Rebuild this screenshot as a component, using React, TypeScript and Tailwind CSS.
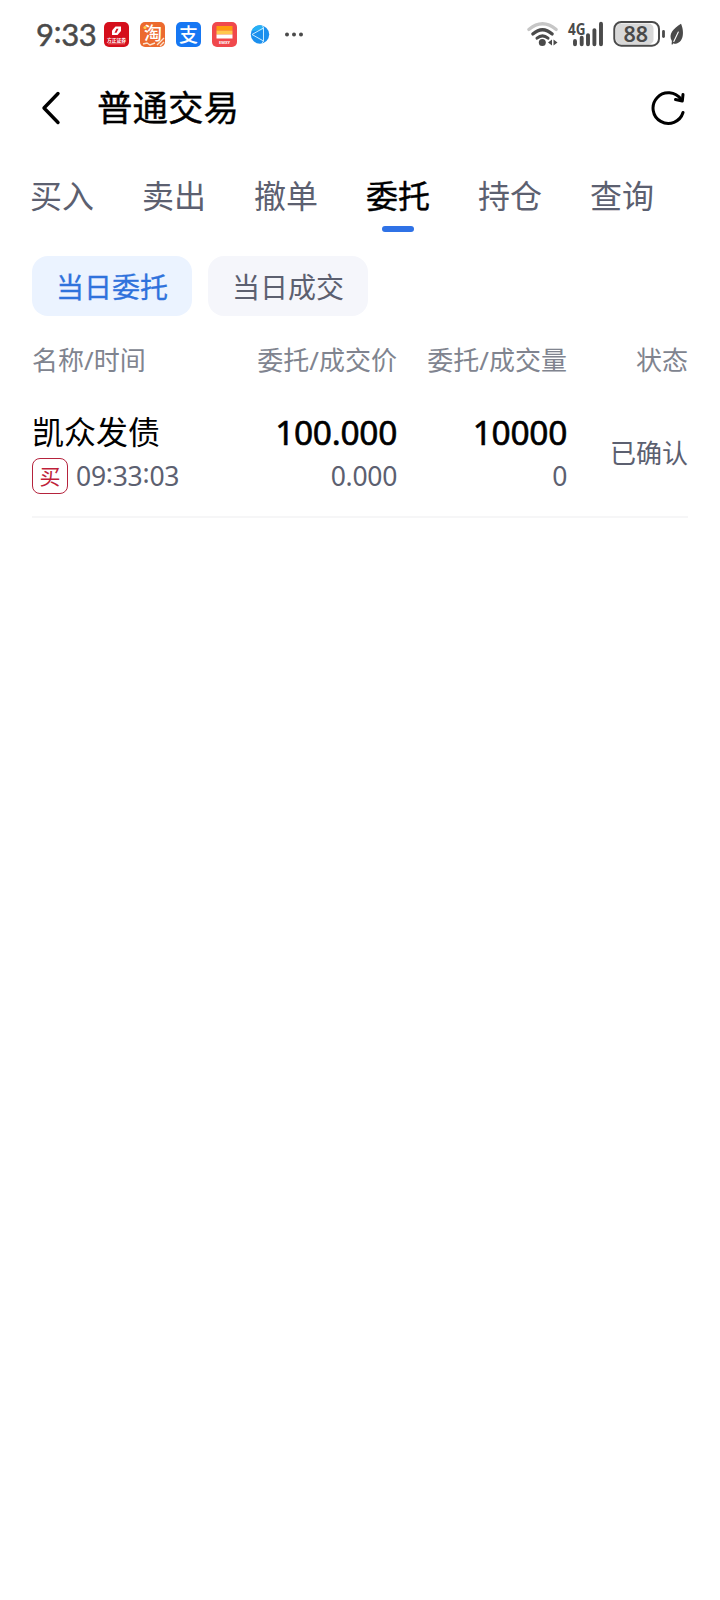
import React from 'react';

interface Order {
    name: string;
    side: string;
    time: string;
    price: string;
    dealPrice: string;
    amount: string;
    dealAmount: string;
    status: string;
}

const TABS = ['买入', '卖出', '撤单', '委托', '持仓', '查询'];
const FILTERS = ['当日委托', '当日成交'];

const ORDERS: Order[] = [
    {
        name: '凯众发债',
        side: '买',
        time: '09:33:03',
        price: '100.000',
        dealPrice: '0.000',
        amount: '10000',
        dealAmount: '0',
        status: '已确认',
    },
];

// Digits with the colons lifted to the middle of the figure height
const Clock: React.FC<{ value: string }> = ({ value }) => (
    <>
        {value.split(':').map((part, i) => (
            <React.Fragment key={i}>
                {i > 0 && <span className="relative -top-[0.1em]">:</span>}
                {part}
            </React.Fragment>
        ))}
    </>
);

const AppIcons: React.FC = () => (
    <div className="flex items-center gap-[11px] ml-[10px]">
        <svg className="w-[25px] h-[25px]" viewBox="0 0 25 25">
            <rect width="25" height="25" rx="5" fill="#d50f1c" />
            <path d="M11.500 4.500h5.500v4.500l-3.500 4h-5.500V8.500z" fill="#fff" />
            <path d="M12.500 6.800h2l-2 4h-2z" fill="#d50f1c" />
            <text x="12.500" y="19.800" textAnchor="middle" fontSize="4.800" fontWeight="700" fill="#fff">方正证券</text>
            <path d="M4 21.800h17" stroke="#f08a8a" strokeWidth="0.800" />
        </svg>
        <svg className="w-[25px] h-[25px]" viewBox="0 0 25 25">
            <rect width="25" height="25" rx="5" fill="#ec6a2e" />
            <text x="13" y="17.500" textAnchor="middle" fontSize="18" fontWeight="500" fill="#fff">淘</text>
            <path d="M3 22l4-1 3 2 5-2M17 23l7-7M20 24l4-4" stroke="#fbe3d0" strokeWidth="1.400" fill="none" />
            <circle cx="5" cy="5.500" r="1.600" fill="#ffd04a" />
        </svg>
        <svg className="w-[25px] h-[25px]" viewBox="0 0 25 25">
            <rect width="25" height="25" rx="5" fill="#1677f3" />
            <text x="12.500" y="19.500" textAnchor="middle" fontSize="19" fontWeight="500" fill="#fff">支</text>
        </svg>
        <svg className="w-[25px] h-[25px]" viewBox="0 0 25 25">
            <rect width="25" height="25" rx="5" fill="#f0484c" />
            <path d="M4.500 4h16v4.500h-16z" fill="#ff9a0c" />
            <path d="M4.500 8.500h16v4h-16z" fill="#ffc74d" />
            <path d="M4.500 12.500h16v4h-16z" fill="#fff" />
            <text x="12.500" y="22.300" textAnchor="middle" fontSize="4" fontWeight="700" fill="#fff">EMXY</text>
        </svg>
        <svg className="w-[25px] h-[25px]" viewBox="0 0 25 25">
            <circle cx="12" cy="12.500" r="9.200" fill="#1b8fee" />
            <path d="M3.500 9a9.200 9.200 0 0 1 11-5.300L15.500 8z" fill="#27b1f5" />
            <path d="M4 12.500L15.500 6v13zM15.500 6l-1-2.500M15.500 19l-1.500 2.500" stroke="#c9ecff" strokeWidth="1" fill="none" />
        </svg>
        <svg className="w-[20px] h-[25px]" viewBox="0 0 20 25">
            <circle cx="3" cy="12.500" r="2" fill="#4a4a4a" />
            <circle cx="10" cy="12.500" r="2" fill="#4a4a4a" />
            <circle cx="17" cy="12.500" r="2" fill="#4a4a4a" />
        </svg>
    </div>
);

const SystemIcons: React.FC = () => (
    <svg className="w-[160px] h-[30px] overflow-visible" viewBox="0 0 160 30">
        {/* wifi */}
        <g fill="none" strokeLinecap="round">
            <path d="M2.800 9.500Q16.500 -2 30.200 9.500" stroke="#c6c6c6" strokeWidth="3.200" />
            <path d="M6.800 14Q16.500 5.500 26.200 14" stroke="#4a4a4a" strokeWidth="3.200" />
            <path d="M11 18.200Q16.500 13.500 22 18.200" stroke="#4a4a4a" strokeWidth="3" />
        </g>
        <circle cx="16.300" cy="22.500" r="3.500" fill="#4a4a4a" />
        <path d="M26 19.500v6l-4-3zM27.500 19.500v6l4-3z" fill="#4a4a4a" />
        {/* signal */}
        <text x="42" y="14.500" fontSize="16.500" fontWeight="700" fill="#4a4a4a" textLength="17.500" lengthAdjust="spacingAndGlyphs">4G</text>
        <path d="M49 21v3.200M55.700 17.800v6.400M62 15.100v9.100M68.400 10.100v14.100M75 3.800v20.400" stroke="#4a4a4a" strokeWidth="3.900" strokeLinecap="round" />
        {/* battery */}
        <rect x="90" y="3.500" width="37.500" height="21" rx="5" fill="#d8d8d8" />
        <rect x="88.300" y="2" width="44.700" height="23.700" rx="7" fill="none" stroke="#4a4a4a" strokeWidth="2" />
        <text x="109.700" y="21.500" textAnchor="middle" fontSize="21.500" fontWeight="600" fill="#4a4a4a">88</text>
        <path d="M137.500 11.500v5" stroke="#4a4a4a" strokeWidth="2.800" strokeLinecap="round" />
        {/* power saving leaf */}
        <path d="M155 3.800c3 6.500 3.500 18-5 20-1 .2-2-.1-2.600-.6l-.8 1.200c-.5.400-1.100.1-1-.5l.3-2.900c-4-7 1.600-12.500 9.100-17.200z" fill="#4a4a4a" />
        <path d="M147.800 21.500l4.500-9.500" stroke="#fff" strokeWidth="1.100" strokeLinecap="round" />
    </svg>
);

const StatusBar: React.FC = () => (
    <div className="h-[69px] pl-9 pr-[34px] flex items-center justify-between text-[#4a4a4a]">
        <div className="flex items-center">
            <span className="w-[58px] font-['Lato'] text-[31px] leading-none tracking-[-0.3px] whitespace-nowrap [-webkit-text-stroke:0.5px]"><Clock value="9:33" /></span>
            <AppIcons />
        </div>
        <SystemIcons />
    </div>
);

const Header: React.FC = () => (
    <header className="h-[77px] pl-[39px] pr-[34px] flex items-center">
        <button aria-label="返回">
            <svg className="w-[24px] h-[36px]" viewBox="0 0 24 36" fill="none" stroke="#000" strokeWidth="3.400" strokeLinecap="round" strokeLinejoin="round">
                <path d="M19 3.500L5 18L19 32.500" />
            </svg>
        </button>
        <h1 className="ml-[34px] -mt-[2px] text-[35.500px] leading-[40px] [-webkit-text-stroke:0.4px]">普通交易</h1>
        <button className="ml-auto" aria-label="刷新">
            <svg className="w-[36px] h-[36px]" viewBox="0 0 36 36" fill="none" stroke="#000" strokeWidth="3" strokeLinecap="round" strokeLinejoin="round">
                <path d="M33 22.500A15.300 15.300 0 1 1 31 9.500" />
                <path d="M25.500 9.500l6.800 1.500.7-6.500" />
            </svg>
        </button>
    </header>
);

const OrderRow: React.FC<{ order: Order }> = ({ order }) => (
    <div className="h-[130px] pt-[24px] border-b-2 border-[#f6f6f7] flex">
        <div className="w-[165px]">
            <p className="h-[40px] text-[32px] leading-[40px]">{order.name}</p>
            <div className="h-[36px] mt-[6px] flex items-center gap-2">
                <span className="w-[36px] h-[36px] rounded-[8px] border border-[#b5233d] text-[#c01f3a] text-[21px] leading-[34px] text-center">{order.side}</span>
                <span className="text-[26.500px] leading-none tracking-[-0.250px] text-[#5c6070]"><Clock value={order.time} /></span>
            </div>
        </div>
        <div className="w-[200px] text-right">
            <p className="h-[40px] text-[33.500px] leading-[40px] tracking-[-0.300px] [-webkit-text-stroke:0.600px]">{order.price}</p>
            <p className="h-[36px] mt-[6px] text-[26.500px] leading-[36px] tracking-[-0.300px] text-[#5c6070]">{order.dealPrice}</p>
        </div>
        <div className="w-[170px] text-right">
            <p className="h-[40px] text-[33.500px] leading-[40px] tracking-[-0.300px] [-webkit-text-stroke:0.600px]">{order.amount}</p>
            <p className="h-[36px] mt-[6px] text-[26.500px] leading-[36px] tracking-[-0.300px] text-[#5c6070]">{order.dealAmount}</p>
        </div>
        <p className="h-[80px] ml-auto text-[26px] leading-[82px] text-[#5c6070]">{order.status}</p>
    </div>
);

export default function App() {
    const activeTab = '委托';
    const activeFilter = '当日委托';

    return (
        <div className="w-[720px] h-[1600px] bg-white text-black overflow-hidden font-['Noto_Sans','Noto_Sans_CJK_SC',sans-serif]">
            <StatusBar />
            <Header />
            <nav className="h-[110px] pt-[30px] pl-[30px] flex gap-[48px]">
                {TABS.map(tab => (
                    <button key={tab} className="w-[64px] flex flex-col items-center">
                        <span className={`h-[40px] text-[32px] leading-[40px] whitespace-nowrap ${tab === activeTab ? 'text-black [-webkit-text-stroke:0.4px]' : 'text-[#5c6070]'}`}>{tab}</span>
                        {tab === activeTab && <span className="w-[32px] h-[6px] mt-[10px] rounded-full bg-[#2f72e6]" />}
                    </button>
                ))}
            </nav>
            <div className="px-8 flex gap-4">
                {FILTERS.map(filter => (
                    <button
                        key={filter}
                        className={`w-[160px] h-[60px] rounded-[16px] text-[28px] leading-[62px] ${filter === activeFilter ? 'bg-[#ebf3ff] text-[#2f72dc] [-webkit-text-stroke:0.3px]' : 'bg-[#f5f6fb] text-[#5c6070]'}`}
                    >
                        {filter}
                    </button>
                ))}
            </div>
            <main className="px-8">
                <div className="h-[72px] pt-[24px] flex text-[26px] leading-[41px] text-[#80848f]">
                    <span className="w-[165px]">名称/时间</span>
                    <span className="w-[200px] text-right">委托/成交价</span>
                    <span className="w-[170px] text-right">委托/成交量</span>
                    <span className="ml-auto">状态</span>
                </div>
                {ORDERS.map(order => <OrderRow key={order.time} order={order} />)}
            </main>
        </div>
    );
}
